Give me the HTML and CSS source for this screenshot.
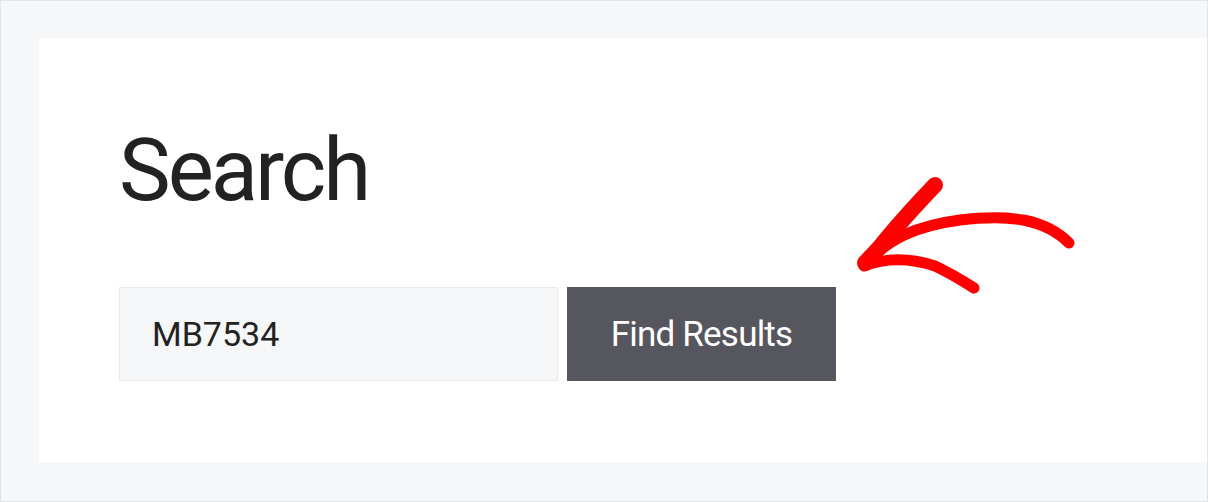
FILE: index.html
```html
<!DOCTYPE html>
<html lang="en">
<head>
<meta charset="utf-8">
<title>Search</title>
<link rel="stylesheet" href="styles.css">
</head>
<body>
<div class="frame">
  <div class="card">
    <h1 class="title">Search</h1>
    <form class="search-form">
      <input class="search-input" type="text" value="MB7534">
      <button class="search-button" type="button">Find Results</button>
    </form>
  </div>
  <svg class="arrow" width="260" height="140" viewBox="840 170 260 140" xmlns="http://www.w3.org/2000/svg">
    <g fill="none" stroke="#ff0000" stroke-linecap="round" stroke-linejoin="round">
      <path d="M935 185 C916 205 895 228 880 247 L865 263" stroke-width="16"/>
      <path d="M868 261 C890 239 915 226 960 220 C1010 214 1045 219 1069 243" stroke-width="11"/>
      <path d="M864 266 C885 258 910 258 935 266 C950 273 963 281 974 288" stroke-width="11"/>
    </g>
  </svg>
</div>
</body>
</html>
```
FILE: styles.css
```css
* { box-sizing: border-box; }
html, body {
  margin: 0;
  padding: 0;
  width: 1208px;
  height: 502px;
  overflow: hidden;
}
body {
  font-family: Roboto, "Liberation Sans", Arial, sans-serif;
  color: #222222;
  background: #f6f7f9;
}
.frame {
  position: relative;
  width: 1208px;
  height: 502px;
  border: 1px solid #e3e5e8;
  background: #f6f7f9;
  padding: 37px 0 39px 38px;
  display: flex;
}
.card {
  flex: 1;
  background: #ffffff;
  padding: 89px 0 0 80px;
}
.title {
  margin: 0 0 73px 0;
  font-size: 87px;
  line-height: 87px;
  font-weight: 400;
  letter-spacing: -3px;
  color: #222222;
}
.search-form {
  display: flex;
  gap: 9px;
  margin: 0;
}
.search-input {
  width: 439px;
  height: 94px;
  margin: 0;
  border: 1px solid #ebebeb;
  background: #f6f7f9;
  padding: 0 0 0 32px;
  font-family: Roboto, "Liberation Sans", Arial, sans-serif;
  font-size: 34px;
  color: #222222;
  outline: none;
}
.search-button {
  width: 269px;
  height: 94px;
  margin: 0;
  border: none;
  background: #56565e;
  color: #ffffff;
  font-family: Roboto, "Liberation Sans", Arial, sans-serif;
  font-size: 35px;
  letter-spacing: -0.8px;
  display: flex;
  align-items: center;
  justify-content: center;
  padding: 0;
}
.arrow {
  position: absolute;
  left: 839px;
  top: 169px;
}
```
